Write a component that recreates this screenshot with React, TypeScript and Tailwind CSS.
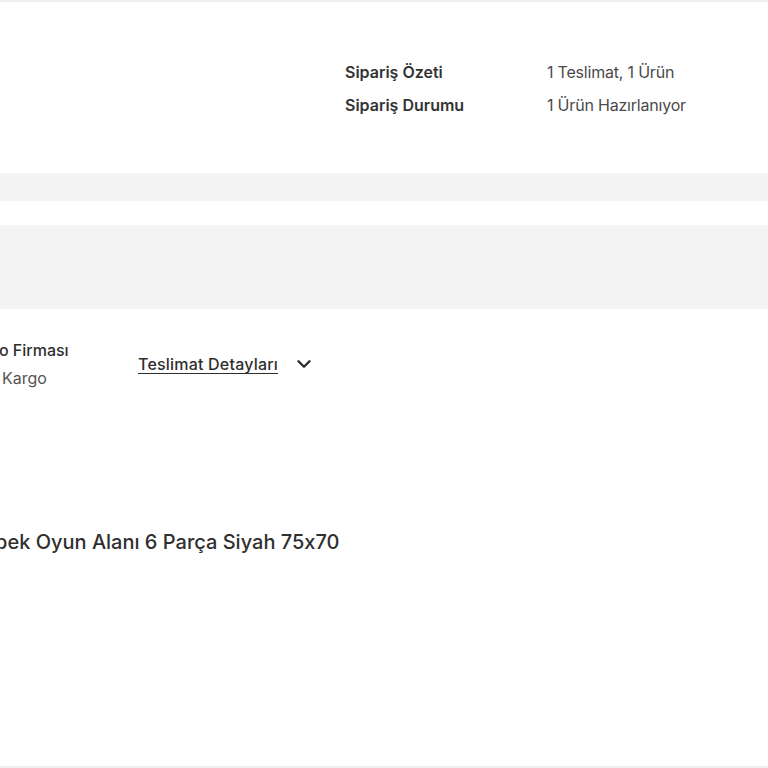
import { ChevronDown } from 'lucide-react';

const summary = [
  { label: 'Sipariş Özeti', value: '1 Teslimat, 1 Ürün' },
  { label: 'Sipariş Durumu', value: '1 Ürün Hazırlanıyor' },
];

export default function App() {
  return (
    <div
      className="h-[768px] w-[768px] overflow-hidden border-y-2 border-[#efefef] bg-white text-[#2b2b2b]"
      style={{ fontFamily: 'Inter, "Noto Sans", sans-serif' }}
    >
      {/* order summary */}
      <div className="flex pb-[56px] pt-[58px]">
        <div className="w-[345px] shrink-0" />
        <div className="grid grid-cols-[202px_1fr] gap-y-[9px] text-base leading-6">
          {summary.map((row) => (
            <div key={row.label} className="contents">
              <span className="font-semibold text-[#333]">{row.label}</span>
              <span className="tracking-[-0.2px] text-[#4a4a4a]">{row.value}</span>
            </div>
          ))}
        </div>
      </div>

      <div className="h-[28px] bg-[#f4f4f4]" />
      <div className="mt-[24px] h-[84px] bg-[#f4f4f4]" />

      {/* delivery */}
      <div className="flex items-center pt-[29px]">
        <div className="ml-[-37px] flex w-[175px] shrink-0 flex-col gap-[4px] text-base leading-6">
          <span className="font-medium text-[#2f2f2f]">Kargo Firması</span>
          <span className="text-[#555]">Aras Kargo</span>
        </div>
        <button type="button" className="flex items-center gap-[15px] text-base font-medium text-[#2f2f2f]">
          <span className="underline decoration-1 underline-offset-[3px] tracking-[0.2px]">Teslimat Detayları</span>
          <ChevronDown size={22} strokeWidth={2.6} className="text-[#2b2b2b]" />
        </button>
      </div>

      {/* product */}
      <div className="ml-[-30px] mt-[138px] whitespace-nowrap text-xl font-medium leading-7 text-[#2f2f2f] [font-feature-settings:'calt'_0]">
        Köpek Oyun Alanı 6 Parça Siyah 75x70
      </div>
    </div>
  );
}
